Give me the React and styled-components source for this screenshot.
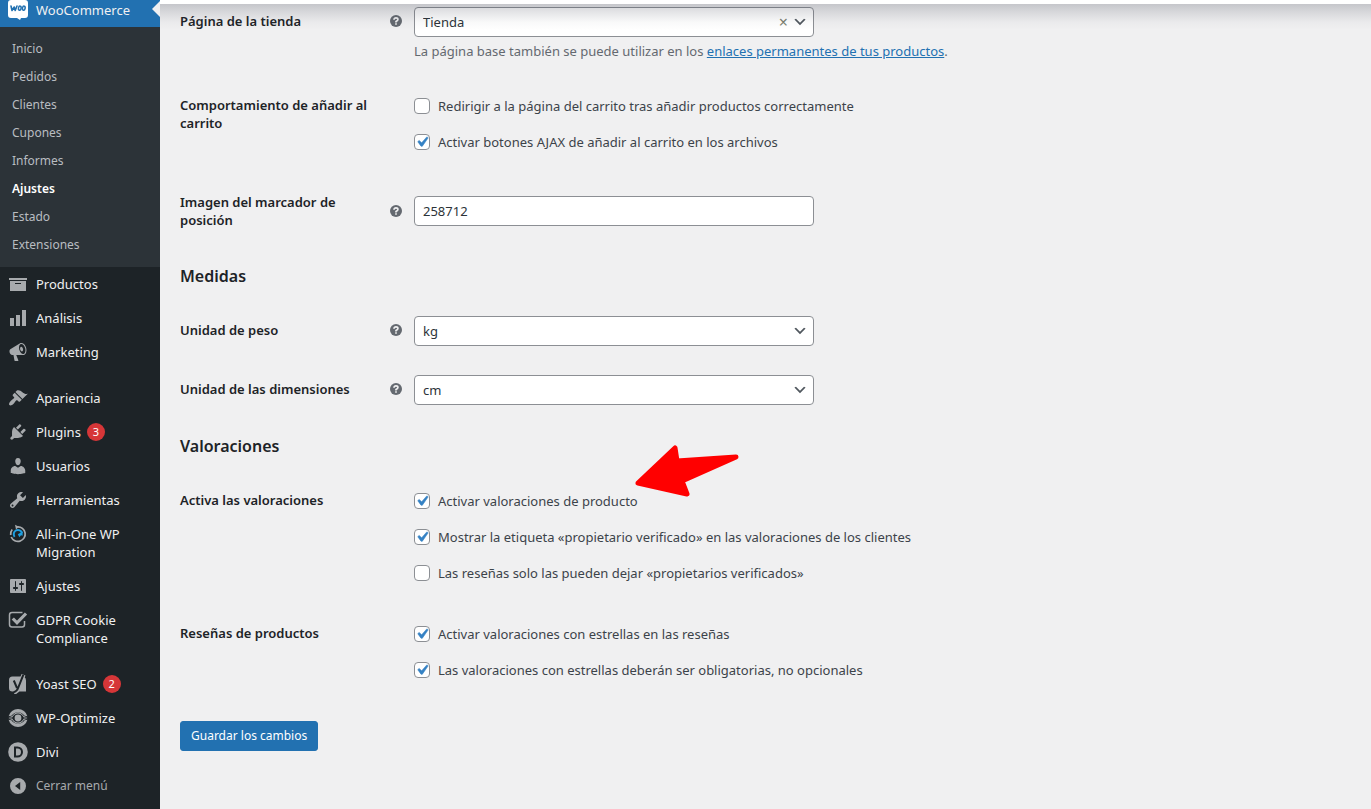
import React, { useId } from "react";
import styled, { createGlobalStyle } from "styled-components";

const GlobalStyle = createGlobalStyle`
  * { box-sizing: border-box; }
  body {
    margin: 0;
    background: #f0f0f1;
    color: #3c434a;
    font-family: "Noto Sans", "Open Sans", sans-serif;
    font-size: 13px;
    line-height: 18px;
  }
  input, select, button { font: inherit; }
`;

const Shell = styled.div`
  display: flex;
  min-height: 100vh;
`;

const Sidebar = styled.nav`
  flex: 0 0 160px;
  background: #1d2327;
  color: #f0f0f1;
`;

const CurrentSection = styled.div`
  position: relative;
  height: 27px;
  display: flex;
  align-items: flex-end;
  overflow: hidden;
  background: #2271b1;
  &::after {
    content: "";
    position: absolute;
    right: 0;
    top: 1px;
    border: 8px solid transparent;
    border-right-color: #f0f0f1;
  }
`;

const List = styled.ul`
  list-style: none;
  margin: 0;
  padding: 0;
`;

const Submenu = styled(List)`
  padding: 8px 0;
  background: #2c3338;
`;

const SubLink = styled.a`
  display: block;
  padding: 5px 12px;
  font-size: 12px;
  text-decoration: none;
  color: ${(p) => (p.$current ? "#fff" : "#b9bdc1")};
  font-weight: ${(p) => (p.$current ? 600 : 400)};
`;

const MenuGroup = styled(List)`
  & + & { margin-top: 12px; }
`;

const MenuLink = styled.a`
  display: flex;
  align-items: flex-start;
  padding: 8px 0;
  text-decoration: none;
  font-size: ${(p) => (p.$muted ? 12 : 13)}px;
  color: ${(p) => (p.$muted ? "#a7aaad" : "#f0f0f1")};
  svg {
    flex: 0 0 20px;
    margin: -1px 8px;
  }
`;

const CountBadge = styled.span`
  display: inline-block;
  min-width: 18px;
  margin-left: 6px;
  border-radius: 9px;
  background: #d63638;
  color: #fff;
  font-size: 11px;
  text-align: center;
  vertical-align: top;
`;

const Main = styled.main`
  position: relative;
  flex: 1;
  min-width: 0;
`;

const TopBar = styled.div`
  position: absolute;
  inset: 0 0 auto 0;
  z-index: 2;
  height: 4px;
  background: #fff;
  pointer-events: none;
  &::after {
    content: "";
    position: absolute;
    inset: 4px 0 auto 0;
    height: 26px;
    background: linear-gradient(rgba(60, 64, 80, 0.24), rgba(60, 64, 80, 0.14) 30%, rgba(60, 64, 80, 0.03) 70%, transparent);
  }
`;

const Form = styled.form`
  padding: 7px 20px 40px;
`;

const Row = styled.div`
  display: grid;
  grid-template-columns: 234px minmax(0, 1fr);
  align-items: ${(p) => (p.$center ? "center" : "start")};
  margin-bottom: ${(p) => p.$after}px;
`;

const LabelCell = styled.div`
  display: flex;
  align-items: center;
  justify-content: space-between;
  min-height: ${(p) => (p.$field ? 28 : 18)}px;
  padding-right: 12px;
  color: #1d2327;
  font-weight: 600;
`;

const LabelText = styled.label`
  max-width: 200px;
`;

const Control = styled.div`
  position: relative;
  width: 100%;
  max-width: 400px;
`;

const fieldBox = `
  display: block;
  width: 100%;
  height: 30px;
  margin: 0;
  padding: 0 8px;
  border: 1px solid #8c8f94;
  border-radius: 4px;
  background: #fff;
  color: #2c3338;
`;

const TextInput = styled.input`${fieldBox}`;
const Select = styled.select`
  ${fieldBox}
  appearance: none;
`;

const FieldIcons = styled.div`
  position: absolute;
  top: 0;
  right: 6px;
  height: 30px;
  display: flex;
  align-items: center;
  gap: 2px;
  pointer-events: none;
`;

const ClearButton = styled.button`
  padding: 0 2px;
  border: 0;
  background: none;
  color: #7c8070;
  font-size: 16px;
  line-height: 18px;
  pointer-events: auto;
`;

const Description = styled.p`
  margin: 4px 0 0;
  line-height: 20px;
  color: #646970;
  a { color: #2271b1; }
`;

const Checks = styled.div`
  display: flex;
  flex-direction: column;
  gap: 16px;
`;

const CheckLabel = styled.label`
  display: flex;
  align-items: center;
  gap: 8px;
  line-height: 20px;
`;

const CheckBox = styled.input`
  appearance: none;
  flex: 0 0 16px;
  height: 16px;
  margin: 0;
  border: 1px solid #8c8f94;
  border-radius: 4px;
  background: #fff;
  &:checked {
    background: #fff url("data:image/svg+xml;utf8,<svg xmlns='http://www.w3.org/2000/svg' viewBox='0 0 20 20'><path d='M14.83 4.89l1.34.94-5.81 8.38H9.02L5.78 9.67l1.34-1.25 2.57 2.4z' fill='%233582c4' stroke='%233582c4' stroke-width='.6'/></svg>") center / 20px no-repeat;
  }
`;

const Heading = styled.h2`
  margin: 0 0 ${(p) => p.$after}px;
  color: #1d2327;
  font-size: 16px;
  font-weight: 600;
  line-height: 24px;
`;

const SaveButton = styled.button`
  height: 30px;
  padding: 0 10px;
  border: 1px solid #2271b1;
  border-radius: 3px;
  background: #2271b1;
  color: #fff;
  font-size: 12px;
`;

const Pointer = styled.svg`
  position: absolute;
  left: 475px;
  top: 444px;
`;

const G = "#a7aaad";
const Icon = ({ children, size = 20, box = 20, ...rest }) => (
  <svg width={size} height={size} viewBox={`0 0 ${box} ${box}`} fill={G} aria-hidden="true" {...rest}>
    {children}
  </svg>
);

const icons = {
  woo: (
    <Icon>
      <path fill="#fff" d="M3 0h14q3 0 3 3v12q0 3-3 3h-4l-1 2-3-2H3q-3 0-3-3V3q0-3 3-3z" />
      <path fill="none" stroke="#2271b1" strokeWidth="1.6" strokeLinecap="round" strokeLinejoin="round" d="M3 6l1 4.500 2.200-3.500 1 3.500L9 6" />
      <ellipse cx="11.800" cy="8.200" rx="1.300" ry="2.100" fill="none" stroke="#2271b1" strokeWidth="1.500" transform="rotate(12 11.800 8.200)" />
      <ellipse cx="15.800" cy="8.200" rx="1.300" ry="2.100" fill="none" stroke="#2271b1" strokeWidth="1.500" transform="rotate(12 15.800 8.200)" />
    </Icon>
  ),
  archive: <Icon><path d="M19 4v2H1V4h18zM2 7h16v10H2V7zm11 3V9H7v1h6z" /></Icon>,
  chart: <Icon><path d="M18 18V2h-4v16h4zm-6 0V7H8v11h4zm-10 0h4v-8H2v8z" /></Icon>,
  megaphone: <Icon><path d="M18.150 5.940c.46 1.620.38 3.220-.02 4.480-.42 1.280-1.260 2.180-2.300 2.480-.16.060-.26.060-.40.060-.06.020-.12.020-.18.020-.06.020-.14.020-.22.020h-6.800l2.220 5.500c.02.140-.06.260-.14.340-.08.100-.24.160-.34.160H6.950c-.10 0-.26-.06-.34-.16-.08-.08-.16-.20-.14-.34l-1-5.500H4.250l-.02-.02c-.50.060-1.080-.18-1.540-.62s-.88-1.080-1.060-1.880c-.24-.80-.20-1.560-.02-2.200.18-.62.58-1.080 1.060-1.300l.02-.02 9-5.400c.10-.06.18-.10.24-.16.060-.04.140-.08.240-.12.160-.08.280-.12.500-.18 1.040-.30 2.240.10 3.220.98s1.840 2.240 2.260 3.860zm-2.580 5.980h-.02c.40-.10.740-.34 1.040-.70.580-.70.860-1.760.86-3.040 0-.64-.10-1.300-.28-1.980-.34-1.360-1.020-2.500-1.780-3.240s-1.680-1.100-2.460-.88c-.82.220-1.400.96-1.700 2-.32 1.040-.28 2.360.06 3.720.38 1.360 1 2.500 1.800 3.240.78.740 1.620 1.100 2.480.88zm-2.540-7.080c.22-.04.42-.02.62.04.38.160.760.480 1.020 1s.42 1.200.42 1.780c0 .30-.04.560-.12.800-.18.480-.44.840-.86.940-.34.100-.80-.06-1.140-.40s-.64-.86-.78-1.500c-.18-.62-.12-1.240.02-1.720s.48-.84.820-.94z" /></Icon>,
  brush: <Icon><path d="M14.480 11.060L7.410 3.990l1.500-1.500c.50-.56 2.300-.47 3.510.32 1.210.80 1.430 1.280 2.910 2.100 1.180.64 2.450 1.260 4.450.85zm-.71.71L6.700 4.700 4.930 6.470c-.39.390-.39 1.020 0 1.410l1.060 1.060c.39.390.39 1.030 0 1.420-.60.600-1.430 1.110-2.210 1.690-.35.260-.70.530-1.010.84C1.430 14.230.400 16.080 1.400 17.070c.99 1 2.840-.03 4.180-1.360.31-.31.580-.66.850-1.020.57-.78 1.080-1.610 1.690-2.210.39-.39 1.020-.39 1.410 0l1.060 1.060c.39.390 1.020.390 1.410 0z" /></Icon>,
  plug: <Icon><path d="M13.110 4.360L9.870 7.600 8 5.730l3.240-3.240c.35-.34 1.050-.20 1.560.32.520.51.660 1.210.31 1.550zm-8 1.770l.91-1.120 9.010 9.010-1.190.84c-.71.710-2.630 1.160-3.820 1.160H6.140L4.900 17.260c-.59.590-1.540.590-2.120 0-.59-.58-.59-1.530 0-2.120l1.240-1.240v-3.880c0-1.130.40-3.190 1.090-3.890zm7.260 3.970l3.240-3.240c.34-.35 1.040-.21 1.550.31.520.51.660 1.210.31 1.550l-3.240 3.250z" /></Icon>,
  user: <Icon><path d="M10 9.250c-2.270 0-2.730-3.440-2.730-3.440C7 4.020 7.820 2 9.970 2c2.160 0 2.980 2.020 2.710 3.810 0 0-.41 3.440-2.680 3.440zm0 2.570L12.720 10c2.390 0 4.520 2.330 4.520 4.530v2.490s-3.650 1.130-7.240 1.130c-3.650 0-7.240-1.130-7.240-1.130v-2.490c0-2.250 1.940-4.480 4.470-4.480z" /></Icon>,
  wrench: <Icon><path d="M16.680 9.770c-1.340 1.340-3.300 1.670-4.950.99l-5.410 6.520c-.99.990-2.590.990-3.580 0s-.99-2.590 0-3.570l6.520-5.420c-.68-1.650-.35-3.610.99-4.950 1.280-1.280 3.120-1.620 4.720-1.060l-2.890 2.890 2.820 2.820 2.860-2.870c.53 1.580.180 3.390-1.080 4.650zM3.810 16.210c.40.390 1.040.390 1.430 0 .40-.40.400-1.040 0-1.430-.39-.40-1.030-.40-1.430 0-.39.390-.39 1.030 0 1.430z" /></Icon>,
  migration: (
    <Icon fill="none">
      <path stroke={G} strokeWidth="1.700" d="M9.500 2.800A7.300 7.300 0 1 1 3.200 13M2.700 11A7.300 7.300 0 0 1 4.200 5.600" />
      <path fill={G} d="M7 .8l4 2-3 2.600z" />
      <path stroke="#1e9fe0" strokeWidth="2" d="M6.600 12.800A4.200 4.200 0 1 1 14 9.200" />
      <path fill="#1e9fe0" d="M9.800 10.200l4.800-2.700v4.300l-1.600-.6-1.600 2z" />
    </Icon>
  ),
  sliders: <Icon><path d="M18 16V4c0-1.100-.9-1-1-1H3c-1.100 0-1 .9-1 1v12c0 1.100.9 1 1 1h14c1 0 1 0 1-1zM8 11h1c.55 0 1 .45 1 1s-.45 1-1 1H8v1.500c0 .28-.22.500-.5.500s-.5-.22-.5-.5V13H6c-.55 0-1-.45-1-1s.45-1 1-1h1V5.500c0-.28.22-.5.500-.5s.5.220.5.500V11zm5-2h-1c-.55 0-1-.45-1-1s.45-1 1-1h1V5.500c0-.28.22-.5.500-.5s.5.220.5.500V7h1c.55 0 1 .45 1 1s-.45 1-1 1h-1v5.500c0 .28-.22.500-.5.500s-.5-.22-.5-.5V9z" /></Icon>,
  gdpr: (
    <Icon fill="none">
      <path stroke={G} strokeWidth="1.500" d="M14.500 2.500H4Q1.500 2.500 1.500 5v9.500Q1.500 17 4 17h10q2.500 0 2.500-2.500V11" />
      <path stroke={G} strokeWidth="3.200" d="M4.800 8.500l4.200 4.300 9-9.300" />
    </Icon>
  ),
  yoast: (
    <Icon>
      <path d="M4.500 2.500H15L11 17.500H4.500q-3.500 0-3.500-3.500V6q0-3.500 3.500-3.500zM16 3q2 .8 2 3.500v11H10z" />
      <path fill="none" stroke={G} strokeWidth="4.200" d="M15.500.8L10.500 14Q9.300 17.800 6 18.500" />
      <path fill="none" stroke="#1d2327" strokeWidth="2" d="M5.800 6.500l3.200 7.500M15.300.8L10.300 13.500Q9 17.500 5.500 18.200" />
    </Icon>
  ),
  optimize: (
    <Icon>
      <path d="M.6 8.200A9.700 9.700 0 0 1 19.400 8.200L16.600 7.800A7.800 7.800 0 0 0 3.400 7.800z" />
      <path d="M.6 11.800A9.700 9.700 0 0 0 19.400 11.800L16.600 12.200A7.800 7.800 0 0 1 3.400 12.200z" />
      <path d="M.4 9.600L4.200 8Q6.800 4.200 10 4.200T15.800 8l3.800 1.600-3.800-.2Q13.500 5.500 10 5.500T4.200 9.400zM.4 10.400L4.200 12Q6.800 15.800 10 15.800T15.800 12l3.800-1.600-3.800.2Q13.500 14.500 10 14.500T4.200 10.600z" />
      <circle cx="10" cy="10" r="3.400" />
    </Icon>
  ),
  divi: (
    <Icon>
      <circle cx="10" cy="10" r="9.800" />
      <path fill="none" stroke="#1d2327" strokeWidth="2" d="M7 5.500h2.500a4.500 4.500 0 0 1 0 9H7z" />
    </Icon>
  ),
  collapse: <Icon><path d="M10 2a8 8 0 1 1 0 16 8 8 0 0 1 0-16zm2.200 4L7 10l5.200 4z" fillRule="evenodd" /></Icon>,
};

const Help = () => (
  <Icon size={12} box={16} fill="#646970" role="img" aria-hidden={undefined} aria-label="Ayuda">
    <circle cx="8" cy="8" r="8" />
    <path fill="none" stroke="#f0f0f1" strokeWidth="2.200" d="M5.300 6.300Q5.500 3.900 8 3.900t2.600 2.200Q10.600 7.400 8 8.700v1.300" />
    <path fill="#f0f0f1" d="M6.900 11h2.200v2H6.900z" />
  </Icon>
);

const Chevron = () => (
  <svg width="16" height="16" viewBox="0 0 20 20" aria-hidden="true">
    <path d="M5 6l5 5 5-5 2 1-7 7-7-7 2-1z" fill="#50575e" />
  </svg>
);

const submenu = ["Inicio", "Pedidos", "Clientes", "Cupones", "Informes", "Ajustes", "Estado", "Extensiones"];

const menuGroups = [
  [
    { icon: "archive", text: "Productos" },
    { icon: "chart", text: "Análisis" },
    { icon: "megaphone", text: "Marketing" },
  ],
  [
    { icon: "brush", text: "Apariencia" },
    { icon: "plug", text: "Plugins", count: 3 },
    { icon: "user", text: "Usuarios" },
    { icon: "wrench", text: "Herramientas" },
    { icon: "migration", text: "All-in-One WP Migration" },
    { icon: "sliders", text: "Ajustes" },
    { icon: "gdpr", text: "GDPR Cookie Compliance" },
  ],
  [
    { icon: "yoast", text: "Yoast SEO", count: 2 },
    { icon: "optimize", text: "WP-Optimize" },
    { icon: "divi", text: "Divi" },
    { icon: "collapse", text: "Cerrar menú", muted: true },
  ],
];

const MenuItem = ({ icon, text, count, muted }) => (
  <li>
    <MenuLink href="#" $muted={muted}>
      {icons[icon]}
      <span>
        {text}
        {count && <CountBadge>{count}</CountBadge>}
      </span>
    </MenuLink>
  </li>
);

const SelectRow = ({ label, value, clearable, after, children }) => {
  const id = useId();
  return (
    <Row $after={after}>
      <LabelCell $field>
        <LabelText htmlFor={id}>{label}</LabelText>
        <Help />
      </LabelCell>
      <div>
        <Control>
          <Select id={id} defaultValue={value}>
            <option>{value}</option>
          </Select>
          <FieldIcons>
            {clearable && <ClearButton type="button" aria-label="Vaciar">×</ClearButton>}
            <Chevron />
          </FieldIcons>
        </Control>
        {children}
      </div>
    </Row>
  );
};

const InputRow = ({ label, value, after }) => {
  const id = useId();
  return (
    <Row $center $after={after}>
      <LabelCell $field>
        <LabelText htmlFor={id}>{label}</LabelText>
        <Help />
      </LabelCell>
      <Control>
        <TextInput id={id} defaultValue={value} />
      </Control>
    </Row>
  );
};

const CheckRow = ({ label, options, after }) => {
  const id = useId();
  return (
    <Row $after={after} role="group" aria-labelledby={id}>
      <LabelCell>
        <LabelText as="span" id={id}>{label}</LabelText>
      </LabelCell>
      <Checks>
        {options.map(([text, checked]) => (
          <CheckLabel key={text}>
            <CheckBox type="checkbox" defaultChecked={checked} />
            {text}
          </CheckLabel>
        ))}
      </Checks>
    </Row>
  );
};

export default function App() {
  return (
    <Shell>
      <GlobalStyle />
      <Sidebar>
        <CurrentSection>
          <MenuLink href="#">{icons.woo}WooCommerce</MenuLink>
        </CurrentSection>
        <Submenu>
          {submenu.map((text) => (
            <li key={text}>
              <SubLink href="#" $current={text === "Ajustes"}>{text}</SubLink>
            </li>
          ))}
        </Submenu>
        {menuGroups.map((group) => (
          <MenuGroup key={group[0].text}>
            {group.map((item) => <MenuItem key={item.text} {...item} />)}
          </MenuGroup>
        ))}
      </Sidebar>
      <Main>
        <TopBar />
        <Form onSubmit={(e) => e.preventDefault()}>
          <SelectRow label="Página de la tienda" value="Tienda" clearable after={35}>
            <Description>
              La página base también se puede utilizar en los{" "}
              <a href="#">enlaces permanentes de tus productos</a>.
            </Description>
          </SelectRow>
          <CheckRow
            label="Comportamiento de añadir al carrito"
            after={41}
            options={[
              ["Redirigir a la página del carrito tras añadir productos correctamente", false],
              ["Activar botones AJAX de añadir al carrito en los archivos", true],
            ]}
          />
          <InputRow label="Imagen del marcador de posición" value="258712" after={35} />
          <Heading $after={28}>Medidas</Heading>
          <SelectRow label="Unidad de peso" value="kg" after={29} />
          <SelectRow label="Unidad de las dimensiones" value="cm" after={29} />
          <Heading $after={33}>Valoraciones</Heading>
          <CheckRow
            label="Activa las valoraciones"
            after={41}
            options={[
              ["Activar valoraciones de producto", true],
              ["Mostrar la etiqueta «propietario verificado» en las valoraciones de los clientes", true],
              ["Las reseñas solo las pueden dejar «propietarios verificados»", false],
            ]}
          />
          <CheckRow
            label="Reseñas de productos"
            after={41}
            options={[
              ["Activar valoraciones con estrellas en las reseñas", true],
              ["Las valoraciones con estrellas deberán ser obligatorias, no opcionales", true],
            ]}
          />
          <SaveButton type="submit">Guardar los cambios</SaveButton>
        </Form>
        <Pointer width="106" height="56" viewBox="0 0 106 56" aria-hidden="true">
          <path
            d="M3 39L40 4L42 17L101 13L47 37L52 50Z"
            fill="#f00"
            stroke="#f00"
            strokeWidth="5"
            strokeLinejoin="round"
          />
        </Pointer>
      </Main>
    </Shell>
  );
}
